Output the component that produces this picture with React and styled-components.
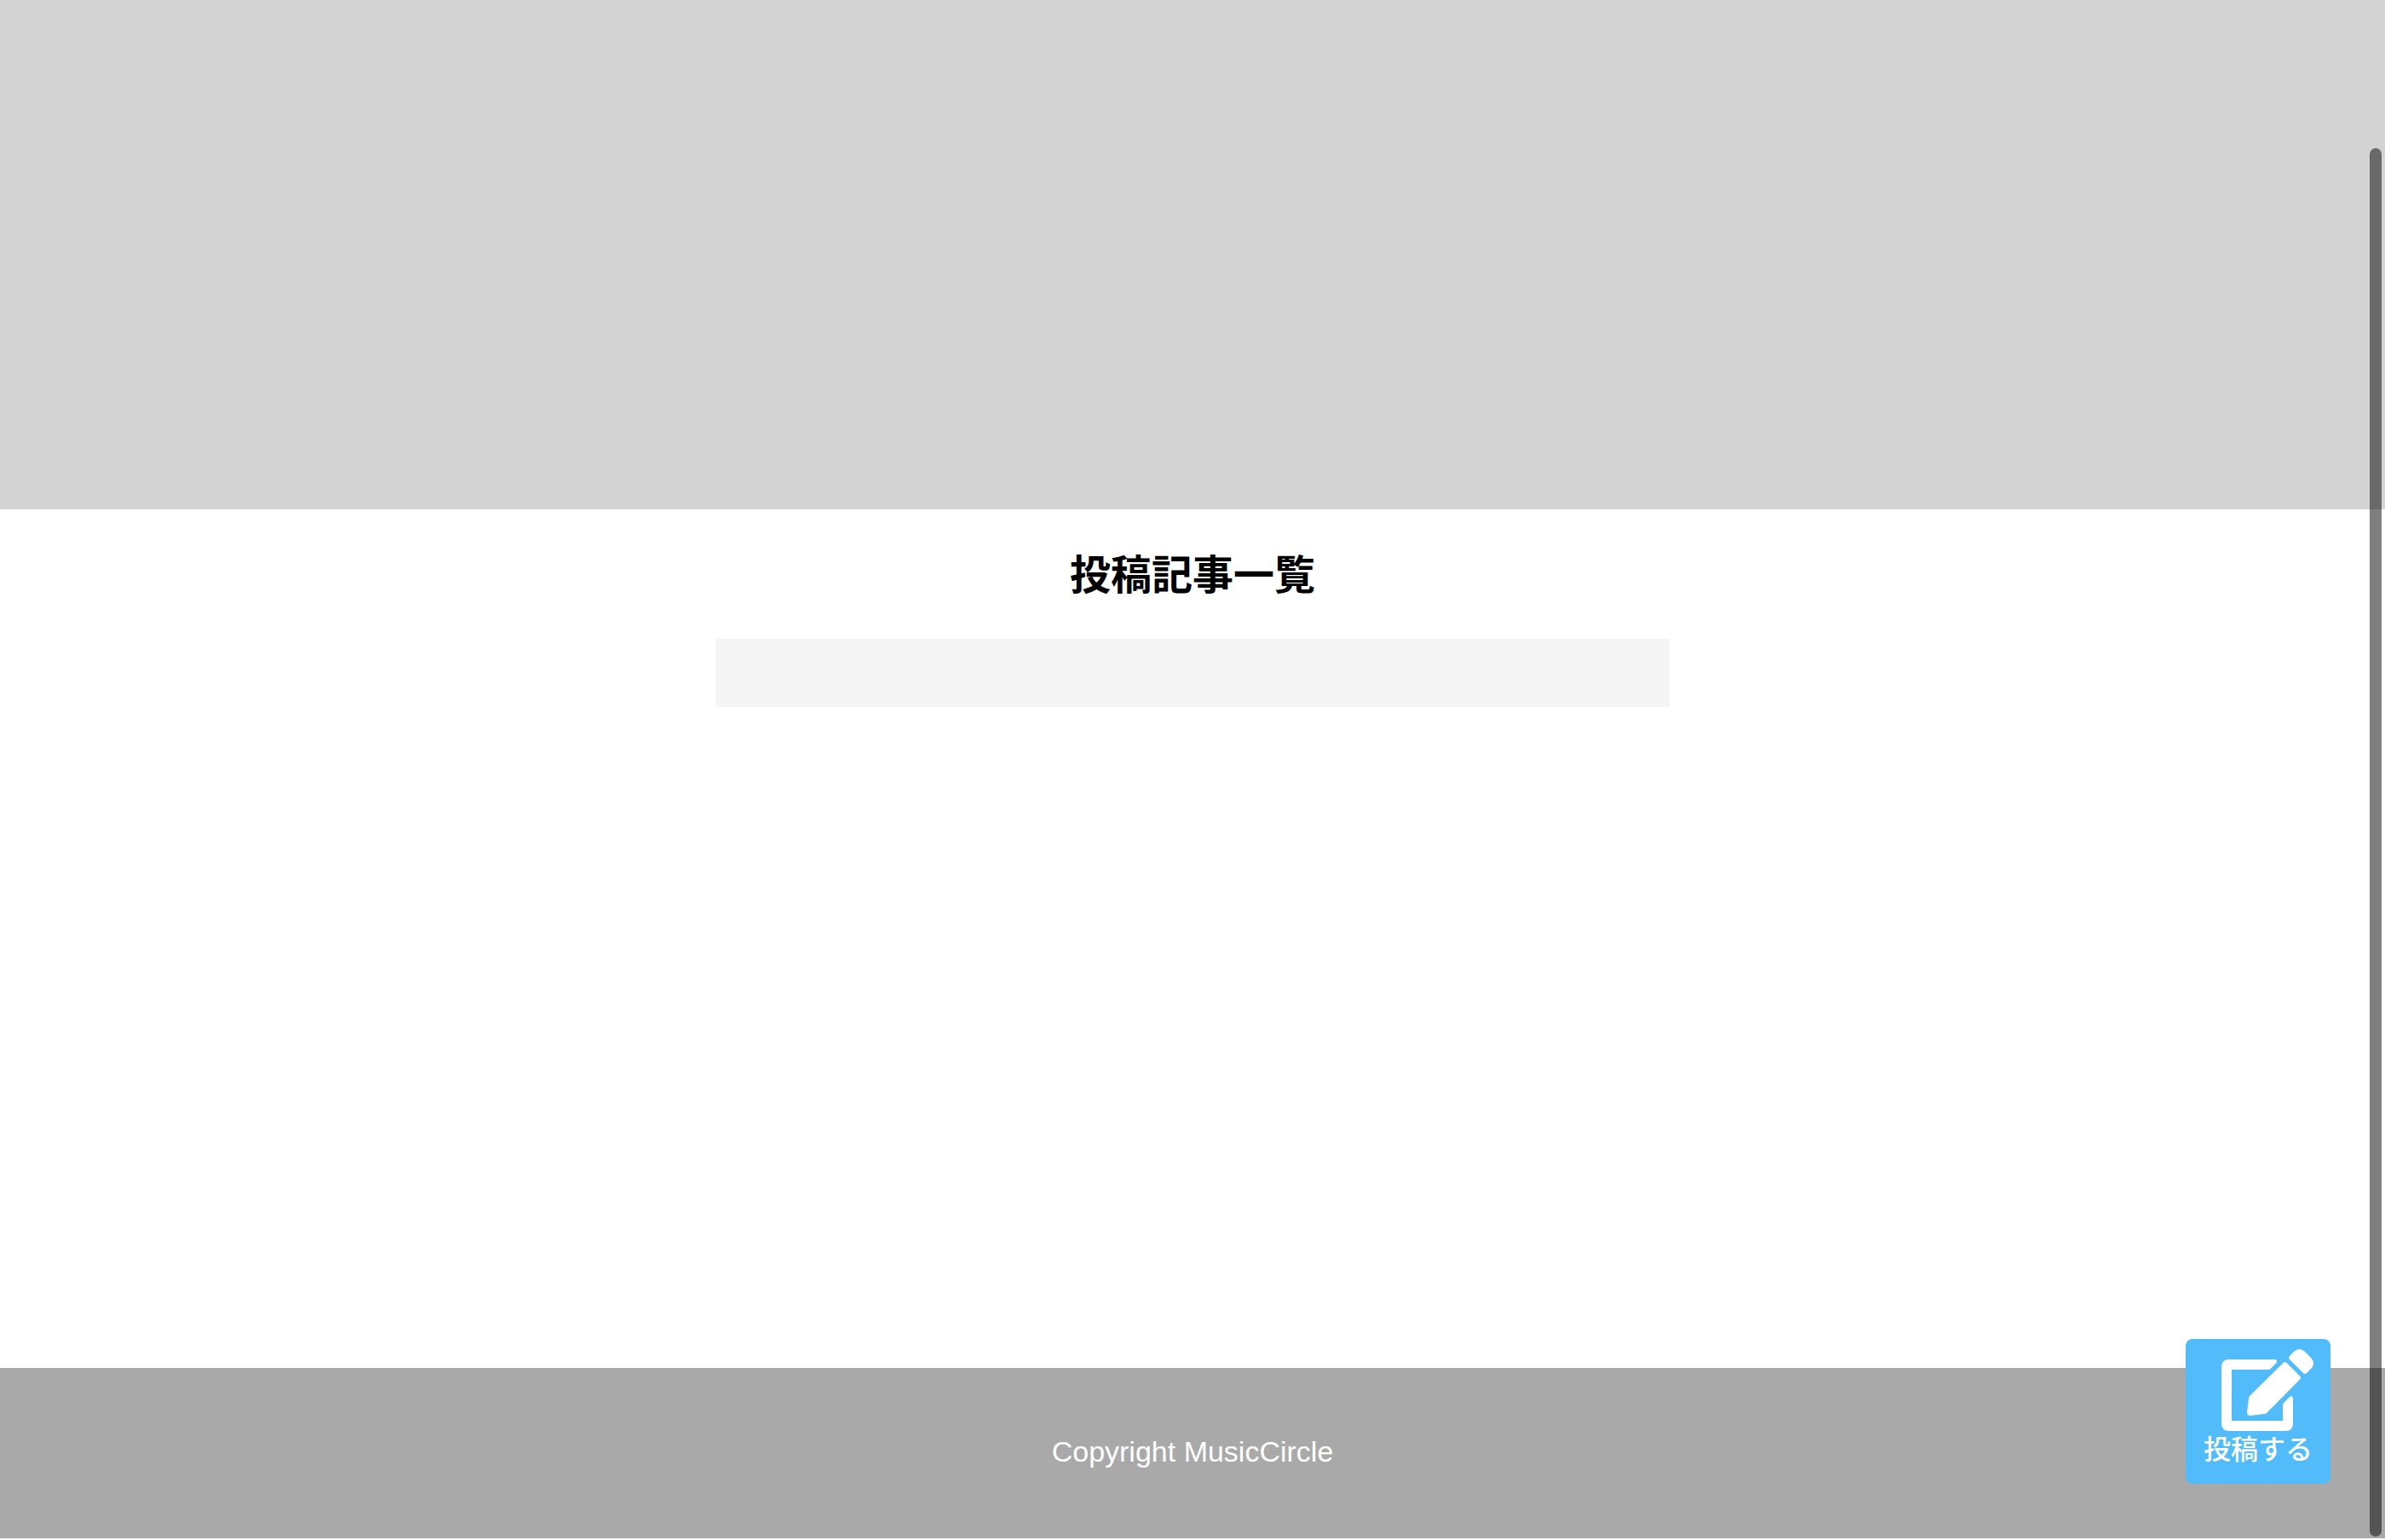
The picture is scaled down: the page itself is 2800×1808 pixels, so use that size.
import React from "react";
import styled, { createGlobalStyle } from "styled-components";

const GlobalStyle = createGlobalStyle`
  *, *::before, *::after { box-sizing: border-box; }
  body {
    margin: 0;
    background: #fff;
    color: #000;
    font-family: "Liberation Sans", "Noto Sans CJK JP", sans-serif;
    font-size: 32px;
  }
  ::-webkit-scrollbar { display: none; }
`;

const Page = styled.div`
  display: flex;
  flex-direction: column;
  min-height: calc(100vh - 2px);
`;

const Hero = styled.header`
  height: 598px;
  background: #d3d3d3;
`;

const Main = styled.main`
  flex: 1;
  display: flex;
  flex-direction: column;
  align-items: center;
`;

const Title = styled.h1`
  margin: 42px 0 38px;
  font-size: 48px;
  line-height: 72px;
  font-weight: 700;
`;

const PostList = styled.section`
  width: 40%;
  padding: 40px;
  background: #f5f5f5;
`;

const Footer = styled.footer`
  display: flex;
  justify-content: center;
  padding: 78px 0 82px;
  background: #a9a9a9;
  color: #fff;
`;

const Copyright = styled.small`
  font-size: 34px;
  line-height: 40px;
`;

const PostButton = styled.button`
  position: fixed;
  right: 64px;
  bottom: 66px;
  width: 170px;
  height: 170px;
  display: flex;
  flex-direction: column;
  align-items: center;
  padding: 12px 0 0;
  border: 0;
  border-radius: 8px;
  background: #52bcfa;
  color: #fff;
  font: inherit;
  font-weight: 500;
  line-height: 44px;
  cursor: pointer;
`;

const EditIcon = styled.svg`
  width: 108px;
  height: 96px;
  margin-left: 22px;
  flex: none;
`;

const ScrollThumb = styled.div`
  position: fixed;
  top: 174px;
  right: 4px;
  bottom: 4px;
  width: 14px;
  border-radius: 7px;
  background: rgba(0, 0, 0, 0.5);
`;

export default function App() {
  return (
    <>
      <GlobalStyle />
      <Page>
        <Hero />
        <Main>
          <Title>投稿記事一覧</Title>
          <PostList />
        </Main>
        <Footer>
          <Copyright>Copyright MusicCircle</Copyright>
        </Footer>
      </Page>
      <PostButton type="button">
        <EditIcon viewBox="0 0 108 96" fill="currentColor" aria-hidden="true">
          <path d="M9 12H63Q66 13 64.500 16L58 22.500Q56.500 24 54 24H12V84H72V66Q72 64 73 63L80 56Q83 54 84 57V87Q84 96 75 96H9Q0 96 0 87V21Q0 12 9 12Z" />
          <path d="M72.500 16Q74.500 14 76.500 16L92 31.500Q94 33.500 92 35.500L53 75Q52 76 50 76L34 78Q30 78 30 74L32 58Q32 56 33 55Z" />
          <path d="M80 12Q78 10 80 8L85 3Q91.500 -3 98 3L105 10Q111 16.500 105 23L100 28Q98 30 96 28Z" />
        </EditIcon>
        投稿する
      </PostButton>
      <ScrollThumb />
    </>
  );
}
